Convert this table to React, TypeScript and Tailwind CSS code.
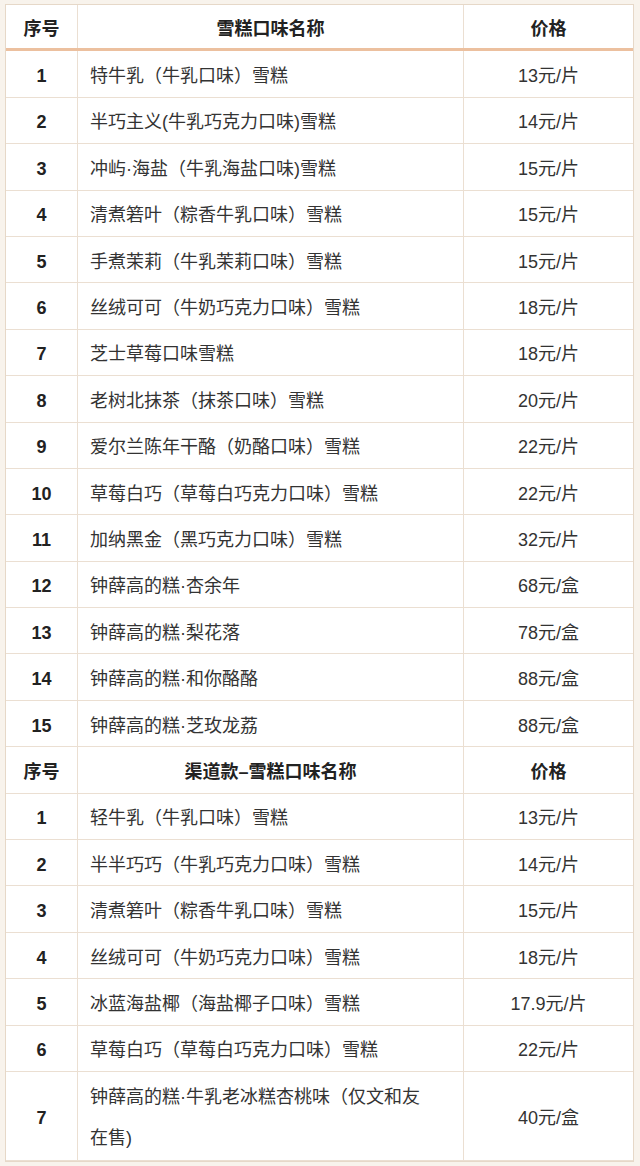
import React from 'react';

type Row = { no: string; name: React.ReactNode; price: string; tall?: boolean };

const mainRows: Row[] = [
  { no: '1', name: '特牛乳（牛乳口味）雪糕', price: '13元/片' },
  { no: '2', name: '半巧主义(牛乳巧克力口味)雪糕', price: '14元/片' },
  { no: '3', name: '冲屿·海盐（牛乳海盐口味)雪糕', price: '15元/片' },
  { no: '4', name: '清煮箬叶（粽香牛乳口味）雪糕', price: '15元/片' },
  { no: '5', name: '手煮茉莉（牛乳茉莉口味）雪糕', price: '15元/片' },
  { no: '6', name: '丝绒可可（牛奶巧克力口味）雪糕', price: '18元/片' },
  { no: '7', name: '芝士草莓口味雪糕', price: '18元/片' },
  { no: '8', name: '老树北抹茶（抹茶口味）雪糕', price: '20元/片' },
  { no: '9', name: '爱尔兰陈年干酪（奶酪口味）雪糕', price: '22元/片' },
  { no: '10', name: '草莓白巧（草莓白巧克力口味）雪糕', price: '22元/片' },
  { no: '11', name: '加纳黑金（黑巧克力口味）雪糕', price: '32元/片' },
  { no: '12', name: '钟薛高的糕·杏余年', price: '68元/盒' },
  { no: '13', name: '钟薛高的糕·梨花落', price: '78元/盒' },
  { no: '14', name: '钟薛高的糕·和你酪酪', price: '88元/盒' },
  { no: '15', name: '钟薛高的糕·芝玫龙荔', price: '88元/盒' },
];

const channelRows: Row[] = [
  { no: '1', name: '轻牛乳（牛乳口味）雪糕', price: '13元/片' },
  { no: '2', name: '半半巧巧（牛乳巧克力口味）雪糕', price: '14元/片' },
  { no: '3', name: '清煮箬叶（粽香牛乳口味）雪糕', price: '15元/片' },
  { no: '4', name: '丝绒可可（牛奶巧克力口味）雪糕', price: '18元/片' },
  { no: '5', name: '冰蓝海盐椰（海盐椰子口味）雪糕', price: '17.9元/片' },
  { no: '6', name: '草莓白巧（草莓白巧克力口味）雪糕', price: '22元/片' },
  {
    no: '7',
    name: (
      <>
        钟薛高的糕·牛乳老冰糕杏桃味（仅文和友
        <br />
        在售)
      </>
    ),
    price: '40元/盒',
    tall: true,
  },
];

function HeaderRow({ title, accent }: { title: string; accent?: boolean }) {
  return (
    <div
      className={
        'grid grid-cols-[72px_386px_1fr] h-[46.4px] font-bold text-[#222] ' +
        (accent ? 'border-b-[3px] border-[#ecc09f]' : 'border-b border-[#ebdfd2]')
      }
    >
      <div className="flex items-center justify-center pt-[5px] border-r border-[#ebdfd2]">序号</div>
      <div className="flex items-center justify-center pt-[5px] border-r border-[#ebdfd2]">{title}</div>
      <div className="flex items-center justify-center pt-[5px]">价格</div>
    </div>
  );
}

function DataRow({ row }: { row: Row }) {
  return (
    <div
      className={
        'grid grid-cols-[72px_386px_1fr] border-b border-[#ebdfd2] text-[#333] ' +
        (row.tall ? 'h-[89px]' : 'h-[46.4px]')
      }
    >
      <div className="flex items-center justify-center pt-[5px] border-r border-[#ebdfd2] font-bold text-[#222]">
        {row.no}
      </div>
      <div
        className={
          'flex items-center pt-[5px] border-r border-[#ebdfd2] pl-[12px] ' +
          (row.tall ? 'leading-[41px]' : '')
        }
      >
        <span>{row.name}</span>
      </div>
      <div className="flex items-center justify-center pt-[5px]">{row.price}</div>
    </div>
  );
}

export default function App() {
  return (
    <div
      className="w-[640px] h-[1166px] bg-[#f8f3ec] pt-[4px] pl-[5px] pr-[6px]"
      style={{ fontFamily: '"Liberation Sans", "Noto Sans CJK SC", sans-serif' }}
    >
      <div className="bg-white border border-[#e6d8c8] text-[18px]">
        <HeaderRow title="雪糕口味名称" accent />
        {mainRows.map((r) => (
          <DataRow key={'m' + r.no} row={r} />
        ))}
        <HeaderRow title="渠道款–雪糕口味名称" />
        {channelRows.map((r) => (
          <DataRow key={'c' + r.no} row={r} />
        ))}
      </div>
    </div>
  );
}
